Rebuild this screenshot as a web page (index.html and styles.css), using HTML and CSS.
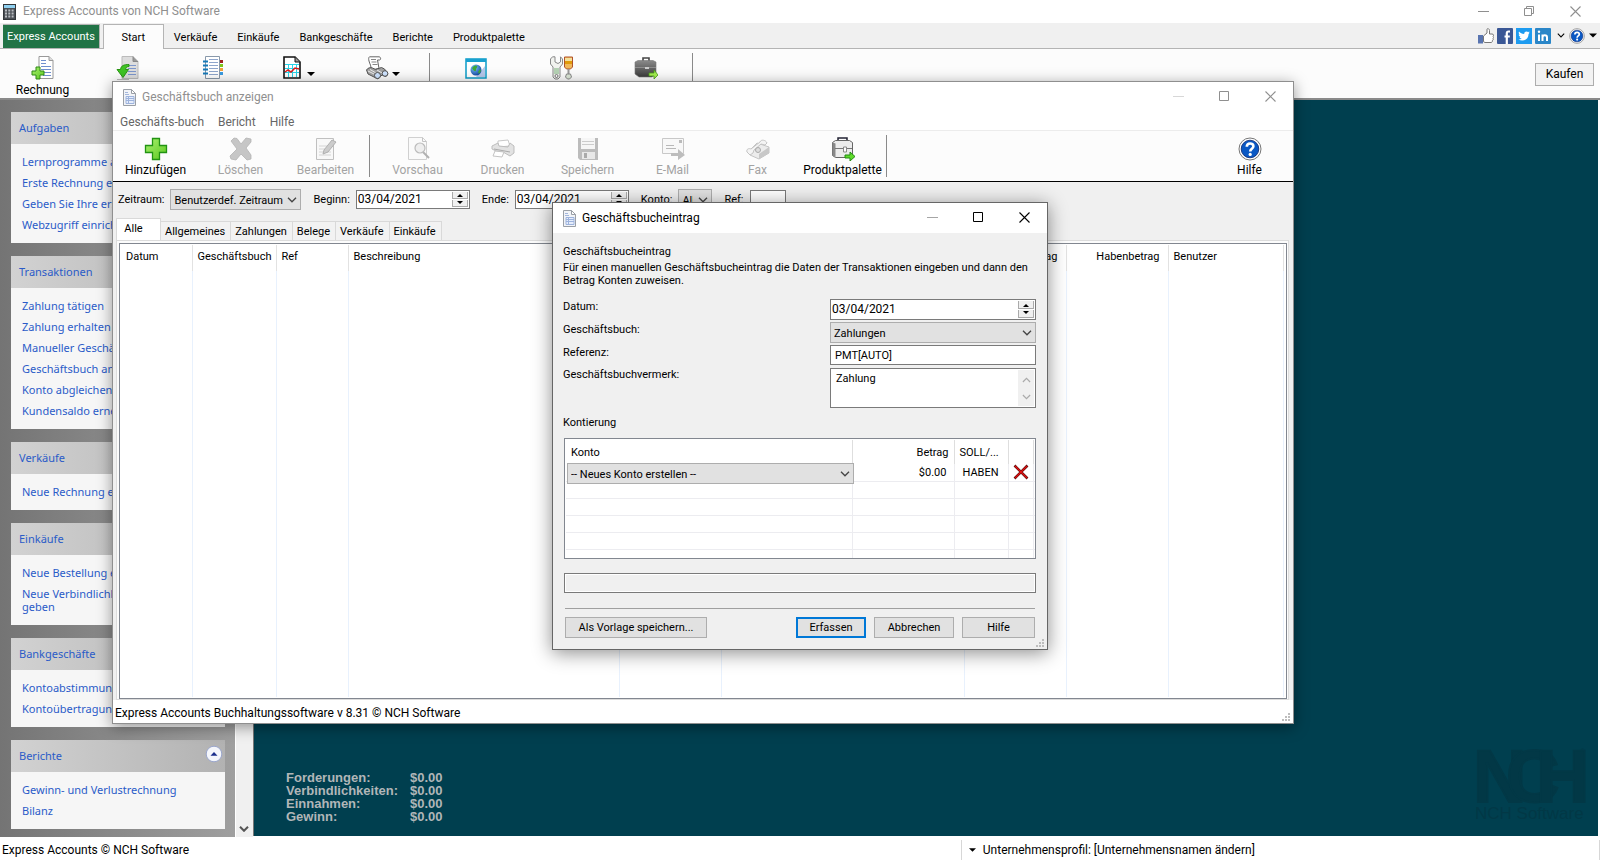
FILE: index.html
```
<!DOCTYPE html>
<html lang="de">
<head>
<meta charset="utf-8">
<title>Express Accounts von NCH Software</title>
<link rel="stylesheet" href="styles.css">
</head>
<body>
<svg class="defs" aria-hidden="true">
  <defs>
    <linearGradient id="gGreen" x1="0" y1="0" x2="1" y2="1"><stop offset="0" stop-color="#a8f070"/><stop offset="1" stop-color="#5cc81e"/></linearGradient>
    <linearGradient id="gDark" x1="0" y1="0" x2="0" y2="1"><stop offset="0" stop-color="#8a8a8a"/><stop offset="1" stop-color="#3c3c3c"/></linearGradient>
    <radialGradient id="gGlobe" cx=".35" cy=".3" r=".8"><stop offset="0" stop-color="#7fc4ff"/><stop offset="1" stop-color="#0a3f9a"/></radialGradient>
    <symbol id="doc" viewBox="0 0 13 17">
      <path d="M.5.5h8l4 4v12H.5z" fill="#f2f4f8" stroke="#9a9fa6"/>
      <path d="M8.500 .5v4h4z" fill="#fff" stroke="#9a9fa6"/>
      <path d="M2 3.500h3M2 5.500h4" stroke="#a3b6dc"/>
      <path d="M3 7.500h8v7H3z" fill="#e6edfb" stroke="#9db3dd"/>
      <path d="M3 9.500h8M3 11.500h8M5.500 7v7" stroke="#9db3dd"/>
    </symbol>
    <symbol id="min" viewBox="0 0 11 11"><path d="M0 5.500h11" stroke="currentColor"/></symbol>
    <symbol id="max" viewBox="0 0 11 11"><path d="M.5.5h9v9h-9z" fill="none" stroke="currentColor"/></symbol>
    <symbol id="restore" viewBox="0 0 11 11"><path d="M.5 2.500h7v7h-7zM2.500 2.500v-2h7v7h-2" fill="none" stroke="currentColor"/></symbol>
    <symbol id="close" viewBox="0 0 11 11"><path d="M.5.5l10 10M10.500 .5l-10 10" stroke="currentColor" stroke-width="1.100"/></symbol>
    <symbol id="chev" viewBox="0 0 10 6"><path d="M1 .8l4 4 4-4" fill="none" stroke="currentColor" stroke-width="1.300"/></symbol>
    <symbol id="tri" viewBox="0 0 8 4"><path d="M0 0h8L4 4z" fill="currentColor"/></symbol>
    <symbol id="help" viewBox="0 0 24 24">
      <circle cx="12" cy="12" r="11" fill="#fff" stroke="#777" stroke-width="1"/>
      <circle cx="12" cy="12" r="8.800" fill="#0a58c4" stroke="#0a2470" stroke-width=".8"/>
      <path d="M8.800 9.800c0-4.400 6.600-4.300 6.600-.6 0 2.600-3.200 2.500-3.200 5.300" fill="none" stroke="#fff" stroke-width="2.600"/>
      <circle cx="12.200" cy="17.400" r="1.600" fill="#fff"/>
    </symbol>
    <symbol id="grip" viewBox="0 0 9 9"><path d="M6 0h2v2H6zM3 3h2v2H3zM6 3h2v2H6zM0 6h2v2H0zM3 6h2v2H3zM6 6h2v2H6z" fill="#bdbdbd"/></symbol>
  </defs>
</svg>

<div class="app">
  <header class="titlebar">
    <svg class="app-icon" viewBox="0 0 13 16"><rect x=".5" y=".5" width="12" height="15" fill="#4a4f55" stroke="#33373b"/><rect x="1" y="1" width="11" height="3" fill="#8fd0f0"/><path d="M2 6.500h9M2 9.500h9M2 12.500h9" stroke="#b9bdc2" stroke-width="2" stroke-dasharray="2 1.300"/></svg>
    <h1>Express Accounts von NCH Software</h1>
    <div class="winbtns">
      <button aria-label="Minimieren"><svg><use href="#min"/></svg></button>
      <button aria-label="Verkleinern"><svg><use href="#restore"/></svg></button>
      <button aria-label="Schließen"><svg><use href="#close"/></svg></button>
    </div>
  </header>

  <nav class="tabstrip">
    <button class="apptab">Express Accounts</button>
    <button class="tab active">Start</button>
    <button class="tab">Verkäufe</button>
    <button class="tab">Einkäufe</button>
    <button class="tab">Bankgeschäfte</button>
    <button class="tab">Berichte</button>
    <button class="tab">Produktpalette</button>
    <div class="social">
      <a href="#" aria-label="Gefällt mir"><svg viewBox="0 0 16 16"><path d="M0 7h5v8.500H0z" fill="#5874b0"/><path d="M5.500 8L9 5V1.500c0-1.500 2.500-1 2.500 1V6H14c2 0 1.800 2 1 2.300.8.600.8 1.800 0 2.200.5.800.3 1.700-.6 2 .2 1-.3 2-1.400 2H7l-1.500-.8z" fill="#fff" stroke="#777"/></svg></a>
      <a href="#" aria-label="Facebook"><svg viewBox="0 0 16 16"><rect width="16" height="16" rx="1" fill="#3a5795"/><path d="M13 3.500h-1.500c-1.400 0-1.700.8-1.700 2V16M7.500 8.500h5.300" fill="none" stroke="#fff" stroke-width="2.200"/></svg></a>
      <a href="#" aria-label="Twitter"><svg viewBox="0 0 16 16"><rect width="16" height="16" fill="#1d9bf0"/><path d="M13.800 4.500l-1.200.4c.4-.3.700-.8.900-1.300l-1.300.5C10.800 2.700 8 3.500 8.200 6 6 6 4.200 5 3 3.500c-.6 1.200-.3 2.500.7 3.200l-1-.2c0 1.200.8 2 1.900 2.400h-1c.3 1 1.200 1.500 2.200 1.600-1 .8-2.200 1-3.500 1 5 2.700 10.300-.1 10.300-5.600z" fill="#fff"/></svg></a>
      <a href="#" aria-label="LinkedIn"><svg viewBox="0 0 16 16"><rect width="16" height="16" rx="1" fill="#2a86c8"/><path d="M4 6.500V13M7.500 6.500V13M7.500 9.500c0-3 4.500-3 4.500 0V13" fill="none" stroke="#fff" stroke-width="2"/><circle cx="4" cy="3.800" r="1.200" fill="#fff"/></svg></a>
      <button class="more" aria-label="Mehr"><svg class="mini"><use href="#chev"/></svg></button>
      <button aria-label="Hilfe"><svg><use href="#help"/></svg></button>
      <button aria-label="Hilfemenü"><svg class="mini"><use href="#tri"/></svg></button>
    </div>
  </nav>

  <div class="ribbon">
    <button class="tool"><svg viewBox="0 0 24 24"><path d="M8 .5h10l4 4v18H8z" fill="#fff" stroke="#999"/><path d="M18 .5v4h4" fill="#ddd" stroke="#999"/><path d="M10 4.500h5M10 7.500h5M10 10.500h10M10 13.500h10M12 16.500h8M12 19.500h8" stroke="#6f8fce"/><path d="M5 11h4v4h4v4H9v4H5v-4H1v-4h4z" fill="url(#gGreen)" stroke="#2f8a16"/></svg><span>Rechnung</span></button>
    <button class="tool" aria-label="Zahlung"><svg viewBox="0 0 24 24"><path d="M6 .5h11l5 5v17H6z" fill="#ddd" stroke="#bbb"/><path d="M17 .5v5h5" fill="#999" stroke="#888"/><path d="M12 9.500h8M12 12.500h8M12 15.500h8M12 18.500h8" stroke="#7d97cc"/><path d="M13 8.500c-5 0-8 1-8.500 5H1l6 8 5.500-8H9.500c.2-2 1.500-3 3.500-3z" fill="#3fc424" stroke="#2a9414"/><path d="M1 23.500h12" stroke="#bbb"/></svg></button>
    <button class="tool" aria-label="Konten"><svg viewBox="0 0 24 24"><path d="M18 4h4v3h-4z" fill="#a02020"/><path d="M18 8h4v3h-4z" fill="#7bc51a"/><path d="M18 12h4v3h-4z" fill="#f2a13a"/><path d="M18 16h4v3h-4z" fill="#3a9be0"/><path d="M4.500 .5h14v22h-14z" fill="#fff" stroke="#8898aa"/><path d="M8 3.500h9M8 6.500h9M8 9.500h9M8 12.500h9M8 15.500h9M8 18.500h9" stroke="#8fa6cc"/><path d="M2 5.500h5M2 9.500h5M2 13.500h5M2 17.500h5" stroke="#1679b8" stroke-width="2"/></svg></button>
    <button class="tool drop" aria-label="Berichte"><svg viewBox="0 0 24 24"><path d="M4 1h11l5 5v16H4z" fill="#fff" stroke="#111" stroke-width="1.600"/><path d="M15 1v5h5" fill="#999" stroke="#111"/><path d="M5 8.500h14M5 12.500h14M5 16.500h14M8.500 9v12M12.500 9v12M16.500 9v12" stroke="#2ad4e8"/><path d="M5 16l3-2 3 2 4-4 4 1" fill="none" stroke="#e01818" stroke-width="1.500"/></svg><svg class="mini"><use href="#tri"/></svg></button>
    <button class="tool drop" aria-label="Suchen"><svg viewBox="0 0 24 24"><path d="M4.500 .8h9.500c1.800 0 2.300 3 .5 3.200h-2l1.500 8.500-8.500 1.500C7 10 4.500 8 4 5 3.500 3 3.500 1.500 4.500 .8z" fill="#fff" stroke="#666"/><path d="M6 3.500h5M6.500 6h5M7.500 8.500h5" stroke="#888"/><path d="M1.500 14c1-2 4-3 6-2l3 1.500 6-2 3 1.500 3.500 5-2 2.500-4-1.500-4 4-3-1.500-7-3.500z" fill="#a2a2a2" stroke="#555"/><path d="M3 15l6 3M5 13.500l6 3.500M12 14l5 3" stroke="#eee"/><circle cx="12.500" cy="19.500" r="3" fill="#cfe4ff" stroke="#555"/><circle cx="20" cy="17.500" r="2.800" fill="#cfe4ff" stroke="#555"/></svg><svg class="mini"><use href="#tri"/></svg></button>
    <i class="sep"></i>
    <button class="tool" aria-label="Web"><svg viewBox="0 0 24 24"><path d="M2 3h20v19H2z" fill="#fff" stroke="#0a9cc8" stroke-width="1.500"/><path d="M2 3h20v3H2z" fill="#19a0d0"/><path d="M21 10v11H12z" fill="#b5c8ea"/><circle cx="12" cy="14" r="5.500" fill="url(#gGlobe)"/><path d="M8 12c2-3 4-3 5-2s-1 2-1 4-2 2-4-2zM14 16l2-3 1 2-2 3z" fill="#3ea83a"/></svg></button>
    <button class="tool" aria-label="Optionen"><svg viewBox="0 0 24 24"><path d="M3.500 .8L1.500 3v5l2.500 3v10l2 2h3l2-2V11l2.500-3V3l-2-2.200V6L9 7.500 6 6V.8z" fill="#f2f3ef" stroke="#888"/><path d="M5 12h5v6H5z" fill="#b5d2b4"/><circle cx="7.500" cy="20" r="1.500" fill="#fff" stroke="#777"/><path d="M15.500 1h8v10l-2 2h-4l-2-2z" fill="#f0b85a" stroke="#b0522a"/><path d="M16 2h7v3h-7z" fill="#f4e09a"/><path d="M16 5h7v3h-7z" fill="#e09a0a"/><path d="M19.500 13v5" stroke="#999" stroke-width="2"/><path d="M17.500 18h4l1 3-2 2h-2l-2-2z" fill="#dde8d8" stroke="#888"/></svg></button>
    <button class="tool" aria-label="Produkte"><svg viewBox="0 0 24 24"><path d="M9 5V2h6v3" fill="none" stroke="#444" stroke-width="1.600"/><path d="M1 6l3-1.500h15L22 6v12l-4 3H5l-4-3z" fill="url(#gDark)" stroke="#777" stroke-width=".6"/><path d="M1 11.500h21" stroke="#999" stroke-width=".8"/><path d="M11 11h4v2h-4z" fill="#ccc"/><path d="M15 17h5v-3l4 5-4 4v-3h-5z" fill="#a4f050" stroke="#4a9c1a" stroke-width=".8"/></svg></button>
    <i class="sep"></i>
    <button class="btn buy">Kaufen</button>
  </div>

  <main class="work">
    <aside class="sidebar">
      <section class="group"><h2>Aufgaben</h2><ul><li><a href="#">Lernprogramme ansehen</a></li><li><a href="#">Erste Rechnung erstellen</a></li><li><a href="#">Geben Sie Ihre ersten Daten ein</a></li><li><a href="#">Webzugriff einrichten</a></li></ul></section>
      <section class="group"><h2>Transaktionen</h2><ul><li><a href="#">Zahlung tätigen</a></li><li><a href="#">Zahlung erhalten</a></li><li><a href="#">Manueller Geschäftsbucheintrag</a></li><li><a href="#">Geschäftsbuch anzeigen</a></li><li><a href="#">Konto abgleichen</a></li><li><a href="#">Kundensaldo erneuern</a></li></ul></section>
      <section class="group"><h2>Verkäufe</h2><ul><li><a href="#">Neue Rechnung erstellen</a></li></ul></section>
      <section class="group"><h2>Einkäufe</h2><ul><li><a href="#">Neue Bestellung erstellen</a></li><li><a href="#">Neue Verbindlichkeit ein-<br>geben</a></li></ul></section>
      <section class="group"><h2>Bankgeschäfte</h2><ul><li><a href="#">Kontoabstimmung</a></li><li><a href="#">Kontoübertragung</a></li></ul></section>
      <section class="group"><h2>Berichte<button class="collapse" aria-label="Einklappen"><svg viewBox="0 0 18 18"><circle cx="9" cy="9" r="7.800" fill="#f4f6fb" stroke="#9aa6cc"/><path d="M5.500 10.800h7L9 7z" fill="#1c2f8c"/></svg></button></h2><ul><li><a href="#">Gewinn- und Verlustrechnung</a></li><li><a href="#">Bilanz</a></li></ul></section>
    </aside>
    <div class="scrollbar"><svg viewBox="0 0 10 6"><path d="M1 .8l4 4 4-4" fill="none" stroke="#555" stroke-width="2"/></svg></div>
    <section class="canvas">
      <dl class="stats">
        <dt>Forderungen:</dt><dd>$0.00</dd>
        <dt>Verbindlichkeiten:</dt><dd>$0.00</dd>
        <dt>Einnahmen:</dt><dd>$0.00</dd>
        <dt>Gewinn:</dt><dd>$0.00</dd>
      </dl>
      <svg class="brand" viewBox="0 0 112 76" role="img" aria-label="NCH Software">
        <g class="mark"><text x="-2" y="55">N</text><text x="31" y="55">C</text><text x="61" y="55">H</text></g>
        <text class="reg" x="105" y="7">®</text>
        <text class="name" x="0" y="72">NCH Software</text>
      </svg>
    </section>
  </main>

  <footer class="statusbar"><span>Express Accounts © NCH Software</span><button class="profile"><svg class="mini"><use href="#tri"/></svg>Unternehmensprofil: [Unternehmensnamen ändern]</button></footer>
</div>

<section class="window journal" aria-label="Geschäftsbuch anzeigen">
  <header class="wintitle">
    <svg class="docicon"><use href="#doc"/></svg><h2>Geschäftsbuch anzeigen</h2>
    <div class="winbtns">
      <button class="off" aria-label="Minimieren"><svg><use href="#min"/></svg></button>
      <button aria-label="Maximieren"><svg><use href="#max"/></svg></button>
      <button aria-label="Schließen"><svg><use href="#close"/></svg></button>
    </div>
  </header>
  <nav class="menubar"><button>Geschäfts-buch</button><button>Bericht</button><button>Hilfe</button></nav>
  <div class="toolbar">
    <button class="tool"><svg viewBox="0 0 24 24"><path d="M8.500 1.500h7v7h7v7h-7v7h-7v-7h-7v-7h7z" fill="url(#gGreen)" stroke="#219313" stroke-width="1.300"/></svg><span>Hinzufügen</span></button>
    <button class="tool" disabled><svg viewBox="0 0 24 24"><path d="M2 4l3-3 3 .5L12 7l5-6 5 1v3l-5 6 5 7v4l-4 1-6-6-5 6-5-1-1-3 7-7z" fill="#c6c6c6" stroke="#b4b4b4" stroke-width=".8"/></svg><span>Löschen</span></button>
    <button class="tool" disabled><svg viewBox="0 0 24 24"><path d="M2.500 1.500h17v21h-17z" fill="#f8f8f8" stroke="#c0c0c0"/><path d="M5 9h8M5 12h6M5 15h12M5 18h12" stroke="#d4d4d4"/><path d="M9 17l1-4 8-10 4 2-8 10z" fill="#ccc" stroke="#b0b0b0"/></svg><span>Bearbeiten</span></button>
    <i class="sep"></i>
    <button class="tool" disabled><svg viewBox="0 0 24 24"><path d="M2.500 .5h14l4 4v18h-18z" fill="#fafafa" stroke="#d0d0d0"/><path d="M16.500 .5v4h4" fill="none" stroke="#c4c4c4"/><path d="M17 15l6 6" stroke="#b0b0b0" stroke-width="2"/><circle cx="14" cy="11" r="5" fill="#eee" stroke="#bbb" stroke-width="1.200"/></svg><span>Vorschau</span></button>
    <button class="tool" disabled><svg viewBox="0 0 24 24"><path d="M7 4l10-1 2 6-12 1z" fill="#fff" stroke="#c8c8c8"/><path d="M1 9l6-3 1 3 9 1 2-4 4 3v7l-4 3-7-4-7-1-4-2z" fill="#e2e2e2" stroke="#bdbdbd"/><path d="M3 12l16 3" stroke="#aaa"/><path d="M4 14l9 1-2 5-9-1z" fill="#fff" stroke="#c4c4c4"/></svg><span>Drucken</span></button>
    <button class="tool" disabled><svg viewBox="0 0 24 24"><path d="M2 1h20v22H4l-2-2z" fill="#bcbcbc"/><path d="M5 1h14v11H5z" fill="#f6f6f6"/><path d="M6 4.500h12M6 7.500h12" stroke="#ccc"/><path d="M6 15h13v7H6z" fill="#e8e8e8"/><path d="M8 16h3v5H8z" fill="#aaa"/></svg><span>Speichern</span></button>
    <button class="tool" disabled><svg viewBox="0 0 24 24"><path d="M1.500 1.500h21v15h-21z" fill="#f8f8f8" stroke="#c8c8c8"/><path d="M18 3h3v3h-3z" fill="#bbb"/><path d="M5 8.500h8M5 11.500h10" stroke="#b8b8b8"/><path d="M10 16h7v-4l7 6-7 5v-4h-7z" fill="#bdbdbd"/></svg><span>E-Mail</span></button>
    <button class="tool" disabled><svg viewBox="0 0 24 24"><path d="M3 14l8-8 12 4v6l-10 6-9-4z" fill="#ececec" stroke="#c4c4c4"/><path d="M13 22v-5l10-7v6z" fill="#c8c8c8"/><path d="M1 15c-1-3 2-4 4-3l9-7c1-3 6-2 7 1l-2 2-4-1-7 6-1 3-3 2z" fill="#f4f4f4" stroke="#c4c4c4"/><circle cx="12" cy="13" r="2.500" fill="#ddd" stroke="#aaa"/></svg><span>Fax</span></button>
    <button class="tool"><svg viewBox="0 0 24 24"><path d="M7 4V1h9v3" fill="none" stroke="#223" stroke-width="1.500"/><path d="M1.500 5.500l3-2h14l3 2v13l-3 2h-14l-3-2z" fill="#ececec" stroke="#666"/><path d="M1.500 5.500l3 1v14l-3-2z" fill="#888"/><path d="M4 11.500h17" stroke="#777"/><path d="M12.500 10h3v5h-3z" fill="#fff" stroke="#888"/><path d="M14 18h5v-3l5 4.500-5 4.500v-3h-5z" fill="#5edb2a" stroke="#238a12"/></svg><span>Produktpalette</span></button>
    <i class="sep"></i>
    <button class="tool last"><svg><use href="#help"/></svg><span>Hilfe</span></button>
  </div>
  <form class="filters">
    <label for="period">Zeitraum:</label>
    <span class="combo period"><select id="period"><option>Benutzerdef. Zeitraum</option></select><svg><use href="#chev"/></svg></span>
    <label for="from">Beginn:</label>
    <span class="date"><input id="from" type="text" value="03/04/2021"><span class="spin"><button type="button" aria-label="Später"></button><button type="button" aria-label="Früher"></button></span></span>
    <label for="to">Ende:</label>
    <span class="date"><input id="to" type="text" value="03/04/2021"><span class="spin"><button type="button" aria-label="Später"></button><button type="button" aria-label="Früher"></button></span></span>
    <label for="acct">Konto:</label>
    <span class="combo acct"><select id="acct"><option>Alle</option></select><svg><use href="#chev"/></svg></span>
    <label for="ref">Ref:</label>
    <input id="ref" class="field ref" type="text">
  </form>
  <div class="viewtabs"><button class="active">Alle</button><button>Allgemeines</button><button>Zahlungen</button><button>Belege</button><button>Verkäufe</button><button>Einkäufe</button></div>
  <div class="pane">
    <div class="listbox">
      <table class="ledger">
        <colgroup><col class="w71"><col class="w84"><col class="w72"><col class="wdesc"><col class="w102"><col><col class="w102"><col class="w102"><col class="w115"><col class="w2"></colgroup>
        <thead><tr><th>Datum</th><th>Geschäftsbuch</th><th>Ref</th><th>Beschreibung</th><th></th><th></th><th class="num">Sollbetrag</th><th class="num">Habenbetrag</th><th>Benutzer</th><th></th></tr></thead>
        <tbody><tr><td></td><td></td><td></td><td></td><td></td><td></td><td></td><td></td><td></td><td></td></tr></tbody>
      </table>
    </div>
  </div>
  <footer class="winstatus">Express Accounts Buchhaltungssoftware v 8.31 © NCH Software<svg class="grip"><use href="#grip"/></svg></footer>
</section>

<section class="window entry" role="dialog" aria-label="Geschäftsbucheintrag">
  <header class="wintitle">
    <svg class="docicon"><use href="#doc"/></svg><h2>Geschäftsbucheintrag</h2>
    <div class="winbtns">
      <button class="off" aria-label="Minimieren"><svg><use href="#min"/></svg></button>
      <button aria-label="Maximieren"><svg><use href="#max"/></svg></button>
      <button aria-label="Schließen"><svg><use href="#close"/></svg></button>
    </div>
  </header>
  <form class="entrybody">
    <h3>Geschäftsbucheintrag</h3>
    <p>Für einen manuellen Geschäftsbucheintrag die Daten der Transaktionen eingeben und dann den Betrag Konten zuweisen.</p>
    <div class="fields">
      <label for="edate">Datum:</label>
      <span class="date"><input id="edate" type="text" value="03/04/2021"><span class="spin"><button type="button" aria-label="Später"></button><button type="button" aria-label="Früher"></button></span></span>
      <label for="ebook">Geschäftsbuch:</label>
      <span class="combo"><select id="ebook"><option>Zahlungen</option></select><svg><use href="#chev"/></svg></span>
      <label for="eref">Referenz:</label>
      <input id="eref" class="field" type="text" value="PMT[AUTO]">
      <label for="enote">Geschäftsbuchvermerk:</label>
      <span class="note"><textarea id="enote">Zahlung</textarea><span class="notebar"><svg class="up"><use href="#chev"/></svg><svg><use href="#chev"/></svg></span></span>
    </div>
    <h3>Kontierung</h3>
    <div class="splitbox">
      <table class="splits">
        <colgroup><col><col class="w102"><col class="w54"><col class="w25"><col class="w1"></colgroup>
        <thead><tr><th>Konto</th><th class="num">Betrag</th><th>SOLL/...</th><th></th><th></th></tr></thead>
        <tbody>
          <tr><td class="pick"><span class="combo"><select aria-label="Konto"><option>-- Neues Konto erstellen --</option></select><svg><use href="#chev"/></svg></span></td><td class="num">$0.00</td><td class="side">HABEN</td><td class="del"><button type="button" aria-label="Zeile löschen"><svg viewBox="0 0 16 16"><path d="M1.500 1.500l13 13M14.500 1.500l-13 13" stroke="#5a0a0a" stroke-width="2.600"/><path d="M2 2l12 12M14 2L2 14" stroke="#e01010" stroke-width="1.300"/></svg></button></td><td></td></tr>
          <tr><td></td><td></td><td></td><td></td><td></td></tr>
          <tr><td></td><td></td><td></td><td></td><td></td></tr>
          <tr><td></td><td></td><td></td><td></td><td></td></tr>
          <tr><td></td><td></td><td></td><td></td><td></td></tr>
          <tr class="cut"><td></td><td></td><td></td><td></td><td></td></tr>
        </tbody>
      </table>
    </div>
    <input class="result" type="text" readonly aria-label="Saldo">
    <div class="actions">
      <button type="button" class="btn tpl">Als Vorlage speichern...</button>
      <button type="button" class="btn primary">Erfassen</button>
      <button type="button" class="btn cancel">Abbrechen</button>
      <button type="button" class="btn helpbtn">Hilfe</button>
    </div>
  </form>
  <svg class="grip"><use href="#grip"/></svg>
</section>
</body>
</html>
```
FILE: styles.css
```
:root {
  --ui: Roboto, "Liberation Sans", sans-serif;
  --side: "Noto Sans", "Open Sans", sans-serif;
  --face: #f0f0f0;
  --line: #7a7a7a;
  --soft: #adadad;
}

* { box-sizing: border-box; }

body {
  margin: 0;
  overflow: hidden;
  font: 11px/13px var(--ui);
  color: #000;
}

h1, h2, h3, p, ul, dl, dd { margin: 0; padding: 0; font: inherit; }
ul { list-style: none; }
button, input, select, textarea { font: inherit; color: inherit; border-radius: 0; margin: 0; }
button { background: none; border: 0; padding: 0; }
a { color: inherit; text-decoration: none; }
svg { display: block; flex: none; }
.defs { position: absolute; width: 0; height: 0; }
.mini { width: 7px; height: 4px; }

/* Main application window */
.app { display: flex; flex-direction: column; height: 100vh; background: #fff; }

.titlebar {
  display: flex;
  align-items: center;
  flex: none;
  height: 23px;
  padding-left: 3px;
  font-size: 12px;
  color: #8f8f8f;
}
.app-icon { width: 13px; height: 16px; margin-right: 7px; }
.winbtns { display: flex; margin-left: auto; }
.winbtns button { display: flex; align-items: center; justify-content: center; width: 46px; height: 24px; }
.winbtns svg { width: 11px; height: 11px; }
.winbtns .off { opacity: .35; }
.titlebar .winbtns { margin-right: 2px; }

.tabstrip {
  display: flex;
  align-items: flex-end;
  flex: none;
  height: 26px;
  padding-left: 3px;
  background: var(--face);
  border-bottom: 1px solid #b4b4b4;
}
.apptab {
  height: 24px;
  padding: 0 4px;
  color: #fff;
  background: #217346;
  border: 1px solid #b4b4b4;
  border-width: 1px 1px 0 0;
  margin-right: 3px;
  white-space: nowrap;
}
.tab { height: 24px; padding: 2px 10px 0; }
.tab.active {
  width: 61px;
  height: 25px;
  padding-top: 0;
  margin-bottom: -1px;
  background: #fcfcfc;
  border: 1px solid #b4b4b4;
  border-bottom: 0;
}
.social { display: flex; align-items: center; gap: 3px; height: 25px; margin-left: auto; padding-right: 3px; }
.social svg { width: 16px; height: 16px; }
.social .mini { width: 8px; height: 5px; }
.social button { padding-left: 1px; }
.social .more { padding-left: 3px; }

.ribbon {
  display: flex;
  flex: none;
  height: 51px;
  padding-top: 4px;
  background: #fcfcfc;
  border-bottom: 2px solid #8a8a8a;
}
.tool {
  display: flex;
  flex-direction: column;
  align-items: center;
  gap: 2px;
  width: 85px;
  padding-top: 3px;
  font-size: 12px;
  line-height: 16px;
}
.tool > svg { width: 24px; height: 24px; }
.tool.drop { flex-direction: row; justify-content: center; align-items: flex-start; gap: 3px; }
.tool.drop .mini { width: 8px; height: 4px; margin-top: 16px; }
.sep { flex: none; width: 1px; background: #8a8a8a; }
.ribbon .sep { height: 44px; margin: 0 3px 0 4px; }
.btn { background: #e1e1e1; border: 1px solid var(--soft); text-align: center; }
.buy { width: 59px; height: 23px; margin: 10px 6px 0 auto; font-size: 12px; background: #f2f2f2; }

.work { display: flex; flex: 1; min-height: 0; }
.sidebar {
  flex: none;
  width: 235px;
  padding: 12px 10px 0 11px;
  overflow: hidden;
  font-family: var(--side);
  color: #2a5bc8;
  background: linear-gradient(90deg, #747474, #9f9f9f);
}
.group { margin-bottom: 13px; background: #f6f6f6; }
.group h2 {
  display: flex;
  align-items: center;
  justify-content: space-between;
  height: 32px;
  padding: 0 2px 2px 8px;
  background: linear-gradient(90deg, #d2d2d2, #b2b2b2);
}
.group ul { padding: 7px 11px 8px; }
.group li { padding: 4px 0; white-space: nowrap; }
.collapse svg { width: 18px; height: 18px; margin-bottom: 2px; }
.scrollbar {
  display: flex;
  align-items: flex-end;
  justify-content: center;
  flex: none;
  width: 18px;
  padding: 0 2px 5px 0;
  background: var(--face);
  border-left: 1px solid #fff;
}
.scrollbar svg { width: 10px; height: 6px; }
.canvas {
  display: flex;
  align-items: flex-end;
  justify-content: space-between;
  flex: 1;
  padding: 0 11px 13px 32px;
  margin: 0 2px 1px 0;
  background: #003f4f;
  border-left: 1px solid #777;
}
.stats {
  display: grid;
  grid-template-columns: auto auto;
  column-gap: 12px;
  font: bold 13px/13px "Liberation Sans", sans-serif;
  color: #b1b6b8;
}
.brand { width: 112px; height: 76px; overflow: visible; fill: #023846; }
.brand .mark { font: bold 74px "Liberation Sans Narrow", "Liberation Sans", sans-serif; stroke: #023846; stroke-width: 2; }
.brand .name { font: 17px "Liberation Sans", sans-serif; }
.brand .reg { font: 7px "Liberation Sans", sans-serif; }

.statusbar { display: flex; align-items: center; justify-content: space-between; flex: none; height: 23px; padding: 3px 0 0 2px; font-size: 12px; }
.profile {
  display: flex;
  align-items: center;
  gap: 7px;
  width: 40%;
  height: 20px;
  padding-left: 7px;
  border: 1px solid #d7d7d7;
  border-width: 0 1px;
}

/* Child windows */
.window {
  position: absolute;
  display: flex;
  flex-direction: column;
  background: var(--face);
  border: 1px solid #8f8f8f;
  box-shadow: 0 3px 14px rgba(0, 0, 0, .4);
}
.wintitle { display: flex; align-items: center; flex: none; height: 30px; padding-left: 9px; background: #fff; font-size: 12px; }
.wintitle .winbtns { align-self: flex-start; padding-top: 2px; }
.docicon { width: 13px; height: 17px; margin-right: 6px; }

.journal { left: 112px; top: 81px; width: 1182px; height: 643px; }
.journal .wintitle { color: #8f8f8f; padding-left: 10px; }
.menubar { display: flex; gap: 14px; flex: none; height: 19px; padding: 2px 7px 0; background: #fff; border-bottom: 1px solid #ececec; font-size: 12px; color: #666; }
.menubar button { height: 16px; }
.toolbar { display: flex; flex: none; height: 51px; padding-top: 4px; background: #fcfcfc; border-bottom: 1px solid #000; }
.toolbar .tool { gap: 1px; padding-top: 2px; }
.toolbar .tool:disabled { color: #a3a3a3; }
.toolbar .sep { height: 42px; margin: 0 5px 0 1px; }
.toolbar .last { margin: 0 1px 0 auto; }

.filters { display: flex; align-items: center; flex: none; height: 35px; padding: 0 5px; }
.filters label { margin-right: 6px; }
.filters .combo, .filters .date { margin-right: 12px; }
.combo { position: relative; display: block; height: 21px; }
.combo select {
  appearance: none;
  width: 100%;
  height: 100%;
  padding: 1px 18px 0 3px;
  overflow: hidden;
  background: #e1e1e1;
  border: 1px solid var(--soft);
}
.combo svg { position: absolute; right: 4px; top: 8px; width: 10px; height: 6px; color: #444; pointer-events: none; }
.period { width: 131px; }
.period select { padding-right: 0; }
.acct { width: 34px; }
.date { display: flex; width: 114px; height: 19px; padding: 1px; background: #fff; border: 1px solid var(--line); }
.date input { flex: 1; width: 0; min-width: 0; padding: 0; border: 0; background: none; font-size: 12px; }
.spin { display: flex; flex-direction: column; gap: 1px; width: 16px; }
.spin button { display: flex; flex: 1; justify-content: center; align-items: flex-end; padding-bottom: 1px; background: #f0f0f0; border: 1px solid #aaa; border-width: 0 1px 1px; }
.spin button::before { content: ""; width: 0; height: 0; border: 3px solid transparent; border-top: 0; border-bottom-color: #000; }
.spin button + button { align-items: flex-start; padding: 1px 0 0; }
.spin button + button::before { border: 3px solid transparent; border-bottom: 0; border-top-color: #000; }
.field { height: 20px; padding: 0 4px; background: #fff; border: 1px solid var(--line); }
.ref { width: 36px; height: 19px; }

.viewtabs { display: flex; align-items: flex-end; flex: none; height: 23px; padding-left: 3px; }
.viewtabs button { height: 19px; padding: 0 5px 0 4px; border: 1px solid #d9d9d9; border-width: 1px 1px 0 0; background: #f2f2f2; }
.viewtabs .active { width: 45px; height: 22px; padding: 0 16px 2px 6px; background: #fff; border-left-width: 1px; }
.pane { display: flex; flex: 1; min-height: 0; margin: 0 4px 0 3px; padding: 2px 1px 0 2px; border: 1px solid #dcdcdc; background: #fcfcfc; }
.listbox { flex: 1; padding: 1px; background: #fff; border: 1px solid #828790; }
table { border-collapse: collapse; table-layout: fixed; width: 100%; }
th { padding: 0; font-weight: normal; text-align: left; white-space: nowrap; }
td { padding: 0; }
th.num, td.num { text-align: right; }
.ledger { height: 100%; }
.ledger th { height: 26px; padding: 5px 6px 0 5px; vertical-align: top; border-right: 1px solid #e2e2e2; }
.ledger th.num { padding-right: 8px; }
.ledger td { border-right: 1px solid #e8f1fd; }
.ledger th:last-child, .ledger td:last-child { border-right: 0; padding: 0; }
.w1 { width: 1px; }
.w2 { width: 2px; }
.w25 { width: 25px; }
.w54 { width: 54px; }
.w71 { width: 71px; }
.w72 { width: 72px; }
.w84 { width: 84px; }
.w102 { width: 102px; }
.w115 { width: 115px; }
.wdesc { width: 271px; }
.winstatus { display: flex; align-items: center; justify-content: space-between; flex: none; height: 23px; padding: 3px 0 0 2px; background: #fff; font-size: 12px; }
.grip { width: 9px; height: 9px; align-self: flex-end; margin: 0 2px 1px 0; }

.entry { left: 552px; top: 202px; width: 496px; height: 448px; border-color: #666; box-shadow: 0 3px 18px rgba(0, 0, 0, .45); }
.entry .wintitle { padding-left: 10px; }
.entrybody { display: flex; flex-direction: column; flex: 1; padding: 12px 11px 0 10px; }
.entrybody p { margin: 3px 0 12px; }
.fields { display: grid; grid-template-columns: 1fr 206px; gap: 2px 0; margin-bottom: 8px; }
.fields label { padding-top: 1px; }
.fields .date { width: auto; height: 21px; }
.note { display: flex; height: 40px; margin-top: 1px; background: #fff; border: 1px solid var(--line); }
.note textarea { flex: 1; width: 0; min-width: 0; padding: 3px 5px; border: 0; resize: none; background: none; }
.notebar { display: flex; flex-direction: column; justify-content: space-between; align-items: center; width: 16px; margin: 1px; padding: 7px 0 6px; background: var(--face); color: #aaa; }
.notebar svg { width: 9px; height: 6px; }
.up { transform: rotate(180deg); }
.splitbox { flex: none; height: 121px; margin: 9px 0 14px 1px; padding: 1px; background: #fff; border: 1px solid #828790; overflow: hidden; }
.splits th { height: 24px; padding: 0 5px; border-right: 1px solid #dedede; }
.splits td { height: 17px; border: 1px solid #ececf0; border-left: 0; border-top: 0; line-height: 13px; }
.splits td.num { padding-right: 7px; }
.splits .side { padding-left: 8px; }
.splits td.pick { position: relative; }
.pick .combo { position: absolute; left: 1px; top: -1px; width: 287px; height: 21px; }
.splits .del { position: relative; }
.del button { position: absolute; left: 4px; top: 0; }
.del svg { width: 16px; height: 16px; }
.splits .cut td { height: 9px; border-bottom: 0; }
.splits th:last-child, .splits td:last-child { border-right: 0; padding: 0; }
.result { flex: none; height: 20px; margin-left: 1px; background: var(--face); border: 1px solid var(--line); box-shadow: inset 0 0 0 1px #fff; }
.actions { display: flex; gap: 8px; margin: 15px 1px 0 2px; padding-top: 8px; border-top: 1px solid #a0a0a0; }
.actions .btn { height: 21px; }
.tpl { width: 142px; margin-right: auto; }
.primary { width: 70px; border: 2px solid #0078d7; }
.cancel { width: 80px; }
.helpbtn { width: 73px; }
```
